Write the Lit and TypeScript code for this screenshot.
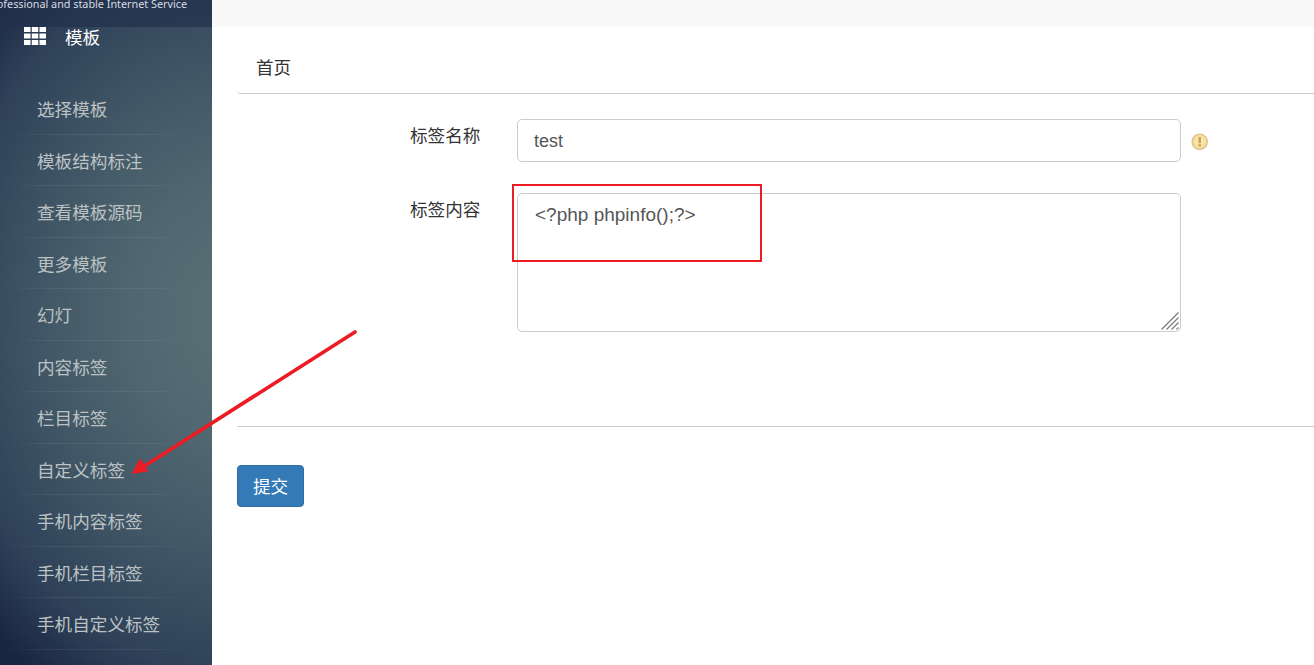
import { LitElement, html, css, svg } from "lit";
import { customElement } from "lit/decorators.js";

const ITEMS = ["选择模板","模板结构标注","查看模板源码","更多模板","幻灯","内容标签","栏目标签","自定义标签","手机内容标签","手机栏目标签","手机自定义标签"];

@customElement("app-root")
export class AppRoot extends LitElement {
  static styles = css`
    :host { display: block; position: relative; width: 1314px; height: 665px; overflow: hidden; background: #fff;
      font-family: "Liberation Sans", "Noto Sans CJK SC", sans-serif; color: #333; }
    * { box-sizing: border-box; }
    .page { display: flex; height: 665px; }
    .side { width: 212px; flex: none; height: 665px; overflow: hidden;
      background: radial-gradient(ellipse 350px 440px at 235px 315px, #5b7177 0%, #506770 30%, #3f5565 58%, #2e4158 82%, #1a2541 100%); }
    .brand { height: 27px; background: rgba(34,48,76,.7); display: flex; justify-content: flex-end; padding-right: 25px;
      font: 10.8px/8px "Noto Sans", sans-serif; color: #d6dbe2; white-space: nowrap; overflow: hidden; }
    .head { height: 56px; display: flex; align-items: flex-start; padding: 0 0 0 24px; color: #fff; font-size: 17.6px; line-height: 20px; }
    .head svg { display: block; width: 22px; height: 18px; margin-right: 19px; }
    .head span { margin-top: 1px; }
    .nav { list-style: none; margin: 0; padding: 0; }
    .nav li { height: 51.5px; padding-left: 37px; font-size: 17.6px; line-height: 54px; color: #bcc2c4; white-space: nowrap; position: relative; }
    .nav li::after { content: ""; position: absolute; left: 6px; right: 24px; bottom: 0; height: 1px;
      background: linear-gradient(90deg, transparent, rgba(255,255,255,.07) 25%, rgba(255,255,255,.07) 75%, transparent); }
    .main { flex: 1; min-width: 0; display: flex; flex-direction: column; }
    .top { height: 27px; background: #f9f9f9; flex: none; }
    .content { padding: 0 0 0 25px; }
    .tabs { height: 67px; border-bottom: 1px solid #ccc; border-bottom-left-radius: 4px; padding: 26px 0 0 19px; font-size: 17.6px; line-height: 30px; color: #333; }
    .row { display: flex; }
    .row label { width: 244px; padding-left: 173px; font-size: 17.6px; line-height: 24px; color: #333; white-space: nowrap; }
    .field { width: 664px; margin-left: 36px; flex: none; border: 1px solid #ccc; border-radius: 5px; font: 18px/24px "Liberation Sans", "Noto Sans CJK SC", sans-serif; color: #555; background: #fff; outline: none; display: block; }
    .r1 { margin-top: 25px; height: 43px; }
    .r1 label { padding-top: 5px; }
    .r1 .field { height: 43px; padding: 2px 16px 0; }
    .r1 svg { width: 18px; height: 18px; margin: 14px 0 0 10px; flex: none; }
    .r2 { margin-top: 31px; height: 139px; }
    .r2 label { padding-top: 5px; }
    .r2 .field { height: 139px; padding: 9px 17px; resize: none; font-size: 19px; }
    hr { margin: 94px 0 0; border: 0; border-top: 1px solid #ccc; }
    button { display: block; margin-top: 38px; width: 67px; height: 42px; background: #337ab7; border: 1px solid #2e6da4; border-radius: 4px; color: #fff; font: 17.6px/24px "Liberation Sans", "Noto Sans CJK SC", sans-serif; padding: 2px 0 0; }
    .over { position: absolute; left: 0; top: 0; width: 1314px; height: 665px; pointer-events: none; }
  `;

  render() {
    return html`
      <div class="page">
        <aside class="side">
          <div class="brand">Professional and stable Internet Service</div>
          <div class="head">
            <svg viewBox="0 0 22 18" fill="#fff">
              ${[0,7.75,15.5].map(x=>[0,6.5,13].map(y=>svg`<rect x=${x} y=${y} width="6.5" height="5"></rect>`))}
            </svg>
            <span>模板</span>
          </div>
          <ul class="nav">${ITEMS.map(i=>html`<li>${i}</li>`)}</ul>
        </aside>
        <main class="main">
          <div class="top"></div>
          <div class="content">
            <div class="tabs">首页</div>
            <div class="row r1">
              <label>标签名称</label>
              <input class="field" .value=${"test"} />
              <svg viewBox="0 0 18 18">
                <defs><radialGradient id="w"><stop offset="0" stop-color="#fbf0b4"></stop><stop offset="1" stop-color="#f3dc94"></stop></radialGradient></defs>
                <circle cx="8.7" cy="8.8" r="7.6" fill="url(#w)" stroke="#e0bd95" stroke-width="1.3"></circle>
                <rect x="7.4" y="4.2" width="2.6" height="6" fill="#cf9f62"></rect>
                <rect x="7.4" y="11.2" width="2.6" height="2.2" fill="#cf9f62"></rect>
              </svg>
            </div>
            <div class="row r2">
              <label>标签内容</label>
              <textarea class="field" .value=${"<?php phpinfo();?>"}></textarea>
            </div>
            <hr />
            <button>提交</button>
          </div>
        </main>
      </div>
      <svg class="over" viewBox="0 0 1314 665">
        <g stroke="#777" stroke-width="1.1" fill="none">
          <path d="M1161.5 329.5 L1178.5 312.5"></path>
          <path d="M1166.5 329.5 L1178.5 317.5"></path>
          <path d="M1171.5 329.5 L1178.5 322.5"></path>
          <path d="M1176.5 329.5 L1178.5 327.5"></path>
        </g>
        <rect x="513" y="185" width="248" height="76" fill="none" stroke="#ed1c24" stroke-width="2"></rect>
        <path d="M355 332 L146 465" stroke="#ed1c24" stroke-width="3.6" stroke-linecap="round" fill="none"></path>
        <path d="M131.5 474 L140 458.5 L145 465 L148 471.5 Z" fill="#ed1c24"></path>
      </svg>
    `;
  }
}
